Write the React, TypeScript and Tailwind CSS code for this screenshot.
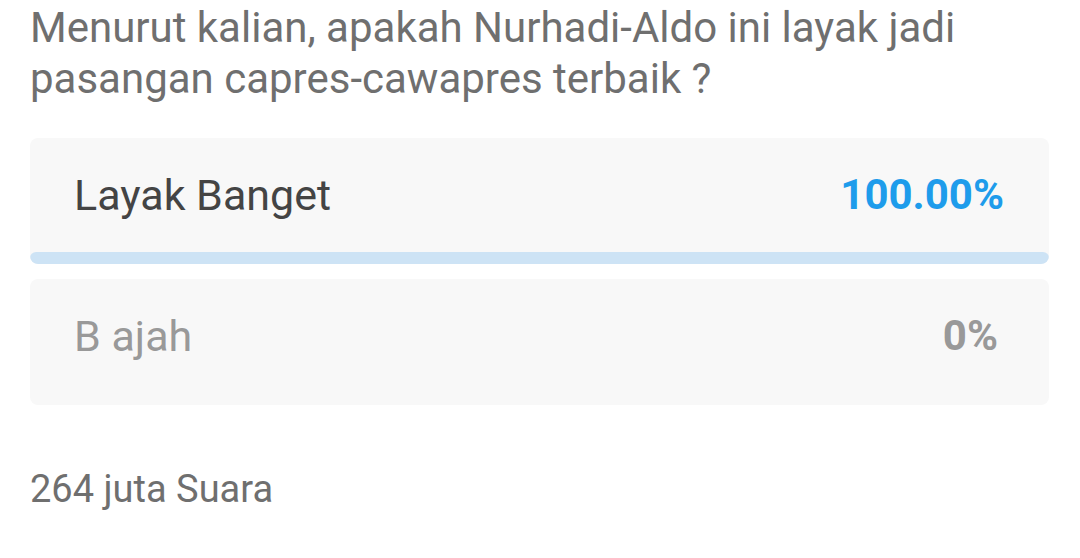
const options = [
  { label: 'Layak Banget', percent: '100.00%', value: 100, active: true },
  { label: 'B ajah', percent: '0%', value: 0, active: false },
];

export default function App() {
  return (
    <div className="min-h-[558px] w-[1080px] bg-white px-[30px] pt-[2px] font-['Roboto',sans-serif]">
      <h1 className="text-[42px] leading-[51px] font-normal text-[#6f6f6f]">
        Menurut kalian, apakah Nurhadi-Aldo ini layak jadi pasangan capres-cawapres terbaik ?
      </h1>

      <div className="mt-[34px] flex w-[1019px] flex-col gap-[15px]">
        {options.map((o) => (
          <div key={o.label} className="relative h-[126px] overflow-hidden rounded-[8px] bg-[#f8f8f8]">
            <div className="flex h-[114px] items-center justify-between pl-[44px] pr-[45px]">
              <span
                className={
                  o.active
                    ? 'text-[43px] leading-none text-[#444444]'
                    : 'text-[43px] leading-none text-[#999999]'
                }
              >
                {o.label}
              </span>
              <span
                className={
                  o.active
                    ? 'text-[42px] font-bold leading-none text-[#1e9ceb]'
                    : 'mr-[6px] text-[42px] font-bold leading-none text-[#999999]'
                }
              >
                {o.percent}
              </span>
            </div>
            {o.value > 0 && (
              <div
                className="absolute bottom-0 left-0 h-[12px] rounded-full bg-[#cde3f5]"
                style={{ width: `${o.value}%` }}
              />
            )}
          </div>
        ))}
      </div>

      <p className="mt-[65px] text-[38px] leading-none text-[#6f6f6f]">264 juta Suara</p>
    </div>
  );
}
